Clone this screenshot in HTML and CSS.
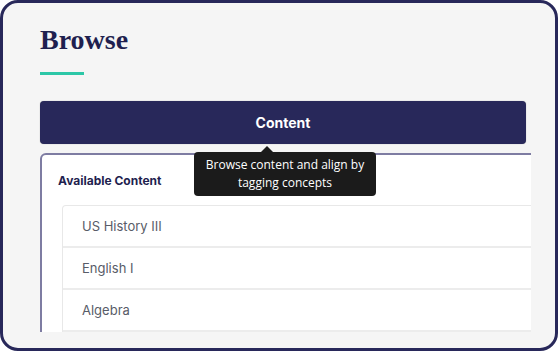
FILE: index.html
```html
<!DOCTYPE html>
<html>
<head>
<title>Browse</title>
<link rel="stylesheet" href="styles.css">
</head>
<body>
<div class="frame">
    <div class="viewport">
        <h1 class="title">Browse</h1>
        <div class="accent"></div>

        <div class="tab-wrap">
            <button class="tab">Content</button>
            <div class="tooltip">Browse content and align by<br>tagging concepts</div>
        </div>

        <div class="panel">
            <h2 class="panel-title">Available Content</h2>
            <ul class="content-list">
                <li>US History III</li>
                <li>English I</li>
                <li>Algebra</li>
            </ul>
        </div>
    </div>
</div>
</body>
</html>
```
FILE: styles.css
```css
body {
    margin: 0;
    background-color: white;
    font-family: Inter, "Open Sans", sans-serif;
}

.frame {
    width: 558px;
    height: 351px;
    box-sizing: border-box;
    border: 3px solid #28285a;
    border-radius: 18px;
    background-color: #f5f5f5;
    overflow: hidden;
}

.viewport {
    position: relative;
    width: 528px;
    height: 329px;
    box-sizing: border-box;
    padding: 21px 0 0 37px;
    overflow: hidden;
}

.title {
    margin: 0;
    font-family: "Liberation Serif", serif;
    font-size: 28px;
    line-height: 32px;
    font-weight: bold;
    color: #1f1f4f;
}

.accent {
    width: 44px;
    height: 3px;
    margin-top: 16px;
    background-color: #2cc7a7;
}

.tab-wrap {
    position: relative;
    margin-top: 26px;
}

.tab {
    display: block;
    width: 486px;
    height: 43px;
    border: none;
    border-radius: 4px;
    background-color: #28285a;
    color: white;
    font-family: Inter, sans-serif;
    font-size: 14px;
    font-weight: bold;
    box-shadow: 0 0 1px rgba(0, 0, 0, 0.4);
}

/* tooltip hanging under the tab */
.tooltip {
    position: absolute;
    left: 154px;
    top: 51px;
    width: 182px;
    height: 44px;
    box-sizing: border-box;
    padding-top: 4px;
    border-radius: 4px;
    background-color: #1b1b1b;
    color: white;
    font-family: "Open Sans", sans-serif;
    font-size: 12px;
    line-height: 18px;
    text-align: center;
    z-index: 2;
}

.tooltip::before {
    content: "";
    position: absolute;
    left: 67px;
    top: -6px;
    border-left: 6px solid transparent;
    border-right: 6px solid transparent;
    border-bottom: 6px solid #1b1b1b;
}

.panel {
    width: 520px;
    height: 260px;
    margin-top: 9px;
    border: 2px solid #7e7ca2;
    border-radius: 6px;
    background-color: white;
    padding: 18px 0 0 16px;
}

.panel-title {
    margin: 0;
    font-size: 12px;
    line-height: 16px;
    font-weight: bold;
    color: #1f1f4f;
}

.content-list {
    list-style: none;
    margin: 16px 0 0 4px;
    padding: 0;
    border: 1px solid #e8e8e8;
    border-bottom: none;
    border-radius: 4px 4px 0 0;
}

.content-list li {
    height: 40px;
    line-height: 40px;
    padding-left: 19px;
    border-bottom: 2px solid #ececec;
    font-size: 13px;
    color: #585c68;
}
```
